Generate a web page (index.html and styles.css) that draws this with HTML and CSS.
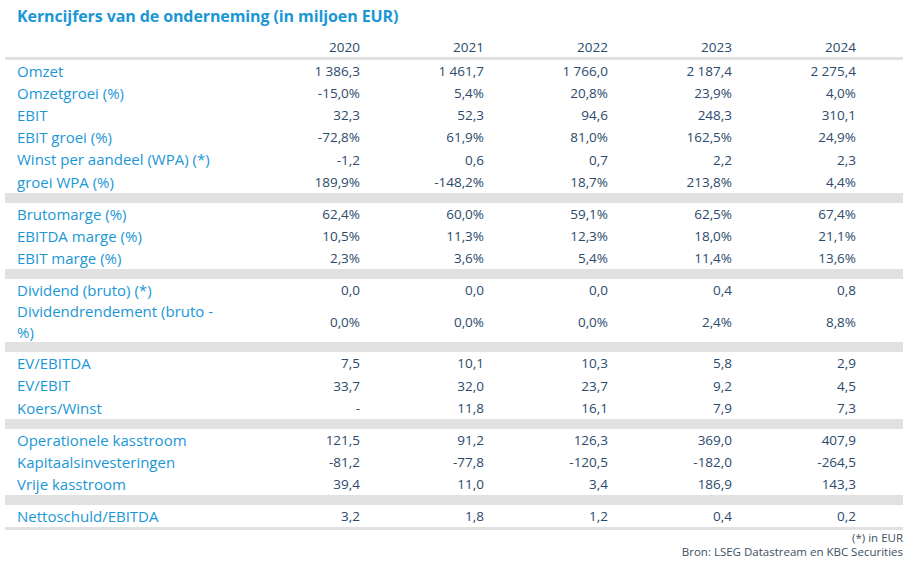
FILE: index.html
```html
<!DOCTYPE html>
<html lang="nl">
<head>
<meta charset="utf-8">
<title>Kerncijfers</title>
<link rel="stylesheet" href="styles.css">
</head>
<body>
<div class="wrap">
  <h1 class="title">Kerncijfers van de onderneming (in miljoen EUR)</h1>
  <table class="kt">
    <colgroup>
      <col class="c-label"><col class="c-num"><col class="c-num"><col class="c-num"><col class="c-num"><col class="c-num"><col class="c-end">
    </colgroup>
    <thead>
      <tr class="head"><th></th><th>2020</th><th>2021</th><th>2022</th><th>2023</th><th>2024</th><th></th></tr>
    </thead>
    <tbody>
      <tr><td class="lbl">Omzet</td><td>1 386,3</td><td>1 461,7</td><td>1 766,0</td><td>2 187,4</td><td>2 275,4</td><td></td></tr>
      <tr><td class="lbl">Omzetgroei (%)</td><td>-15,0%</td><td>5,4%</td><td>20,8%</td><td>23,9%</td><td>4,0%</td><td></td></tr>
      <tr><td class="lbl">EBIT</td><td>32,3</td><td>52,3</td><td>94,6</td><td>248,3</td><td>310,1</td><td></td></tr>
      <tr><td class="lbl">EBIT groei (%)</td><td>-72,8%</td><td>61,9%</td><td>81,0%</td><td>162,5%</td><td>24,9%</td><td></td></tr>
      <tr><td class="lbl">Winst per aandeel (WPA) (*)</td><td>-1,2</td><td>0,6</td><td>0,7</td><td>2,2</td><td>2,3</td><td></td></tr>
      <tr><td class="lbl">groei WPA (%)</td><td>189,9%</td><td>-148,2%</td><td>18,7%</td><td>213,8%</td><td>4,4%</td><td></td></tr>
      <tr class="gap"><td colspan="7"></td></tr>
      <tr><td class="lbl">Brutomarge (%)</td><td>62,4%</td><td>60,0%</td><td>59,1%</td><td>62,5%</td><td>67,4%</td><td></td></tr>
      <tr><td class="lbl">EBITDA marge (%)</td><td>10,5%</td><td>11,3%</td><td>12,3%</td><td>18,0%</td><td>21,1%</td><td></td></tr>
      <tr><td class="lbl">EBIT marge (%)</td><td>2,3%</td><td>3,6%</td><td>5,4%</td><td>11,4%</td><td>13,6%</td><td></td></tr>
      <tr class="gap"><td colspan="7"></td></tr>
      <tr><td class="lbl">Dividend (bruto) (*)</td><td>0,0</td><td>0,0</td><td>0,0</td><td>0,4</td><td>0,8</td><td></td></tr>
      <tr class="tall"><td class="lbl">Dividendrendement (bruto -<br>%)</td><td>0,0%</td><td>0,0%</td><td>0,0%</td><td>2,4%</td><td>8,8%</td><td></td></tr>
      <tr class="gap"><td colspan="7"></td></tr>
      <tr><td class="lbl">EV/EBITDA</td><td>7,5</td><td>10,1</td><td>10,3</td><td>5,8</td><td>2,9</td><td></td></tr>
      <tr><td class="lbl">EV/EBIT</td><td>33,7</td><td>32,0</td><td>23,7</td><td>9,2</td><td>4,5</td><td></td></tr>
      <tr><td class="lbl">Koers/Winst</td><td>-</td><td>11,8</td><td>16,1</td><td>7,9</td><td>7,3</td><td></td></tr>
      <tr class="gap"><td colspan="7"></td></tr>
      <tr><td class="lbl">Operationele kasstroom</td><td>121,5</td><td>91,2</td><td>126,3</td><td>369,0</td><td>407,9</td><td></td></tr>
      <tr><td class="lbl">Kapitaalsinvesteringen</td><td>-81,2</td><td>-77,8</td><td>-120,5</td><td>-182,0</td><td>-264,5</td><td></td></tr>
      <tr><td class="lbl">Vrije kasstroom</td><td>39,4</td><td>11,0</td><td>3,4</td><td>186,9</td><td>143,3</td><td></td></tr>
      <tr class="gap"><td colspan="7"></td></tr>
      <tr class="last"><td class="lbl">Nettoschuld/EBITDA</td><td>3,2</td><td>1,8</td><td>1,2</td><td>0,4</td><td>0,2</td><td></td></tr>
    </tbody>
  </table>
  <div class="notes">
    <div>(*) in EUR</div>
    <div>Bron: LSEG Datastream en KBC Securities</div>
  </div>
</div>
</body>
</html>
```

FILE: styles.css
```css
html, body {
  margin: 0;
  padding: 0;
  background: #ffffff;
}

body {
  font-family: "Open Sans", "Noto Sans", "Liberation Sans", sans-serif;
  color: #2b4a6c;
}

.wrap {
  width: 898px;
  padding: 6px 0 0 5px;
}

.title {
  margin: 0;
  padding-left: 12px;
  font-size: 16px;
  line-height: 20px;
  font-weight: 700;
  color: #1b97d6;
  letter-spacing: -0.1px;
}

.kt {
  margin-top: 10px;
  width: 898px;
  table-layout: fixed;
  border-collapse: separate;
  border-spacing: 0;
  font-size: 13.5px;
  line-height: 16px;
}

.c-label { width: 231px; }
.c-num { width: 124px; }
.c-end { width: 47px; }

.kt th,
.kt td {
  padding: 0;
  text-align: right;
  vertical-align: middle;
  white-space: nowrap;
}

.kt th {
  font-weight: 400;
  height: 21px;
  border-bottom: 3px solid #e1e1e1;
  color: #2b4a6c;
}

.kt td {
  height: 22.15px;
}

.kt td.lbl {
  text-align: left;
  padding-left: 12px;
  font-size: 15px;
  line-height: 16.5px;
  color: #1b97d6;
}

.kt tr.tall td {
  height: 40px;
}

.kt tr.tall td.lbl {
  line-height: 20.5px;
}

.kt tr.gap td {
  height: 10px;
  background: #e1e1e1;
}

.kt tr.last td {
  border-bottom: 3px solid #e1e1e1;
}

.notes {
  margin-top: 1px;
  text-align: right;
  font-size: 11.5px;
  line-height: 14px;
  color: #3c4f63;
}
```
